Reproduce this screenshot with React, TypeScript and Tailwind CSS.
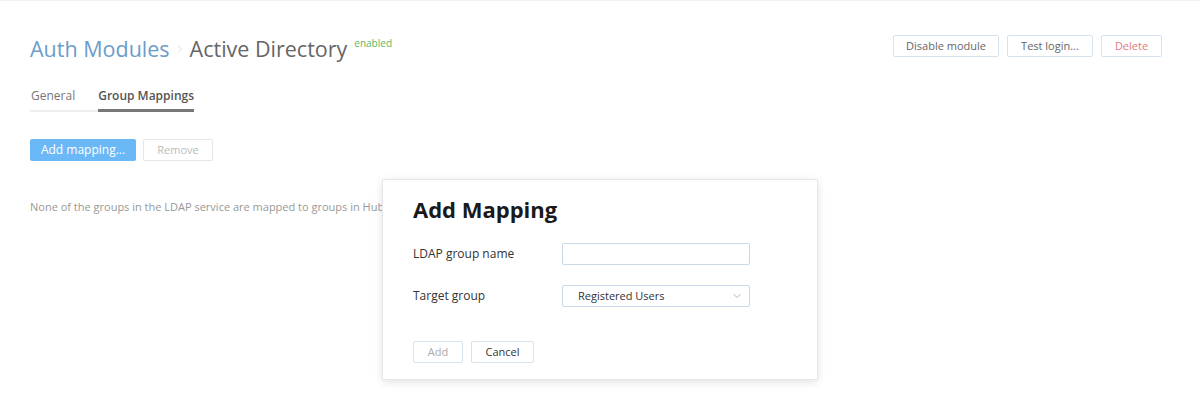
import { ChevronDown, ChevronRight } from "lucide-react";

const font = { fontFamily: '"Open Sans", "Noto Sans", sans-serif' };

function GhostButton({
  children,
  tone = "text-[#666]",
  className = "",
}: {
  children: React.ReactNode;
  tone?: string;
  className?: string;
}) {
  return (
    <button
      className={`flex h-[22px] items-center justify-center rounded-[2px] border border-[#d5e3f0] bg-white text-[11px] ${tone} ${className}`}
      type="button"
    >
      {children}
    </button>
  );
}

function AddMappingDialog() {
  return (
    <div className="absolute left-[382px] top-[178px] h-[201px] w-[436px] rounded-[2px] border border-[#e3e7ec] bg-white pl-[30px] pt-[14px] shadow-[0_2px_8px_rgba(0,0,0,0.12)]">
      <h2 className="text-[22px] font-bold leading-[30px] text-[#1a1a1a]">Add Mapping</h2>
      <div className="mt-[19px] flex items-center">
        <span className="w-[149px] text-[12px] text-[#333]">LDAP group name</span>
        <div className="h-[22px] w-[188px] rounded-[2px] border border-[#c9d9ea] bg-white" />
      </div>
      <div className="mt-[20px] flex items-center">
        <span className="w-[149px] text-[12px] text-[#333]">Target group</span>
        <div className="flex h-[22px] w-[188px] items-center justify-between rounded-[2px] border border-[#c9d9ea] bg-white pl-[15px] pr-[6px]">
          <span className="text-[11px] text-[#333]">Registered Users</span>
          <ChevronDown className="size-3 text-[#999]" strokeWidth={1.5} />
        </div>
      </div>
      <div className="mt-[34px] flex gap-[8px]">
        <GhostButton tone="text-[#aaa]" className="w-[50px]">
          Add
        </GhostButton>
        <GhostButton tone="text-[#333]" className="w-[63px]">
          Cancel
        </GhostButton>
      </div>
    </div>
  );
}

export default function App() {
  return (
    <div className="relative h-[412px] w-[1200px] overflow-hidden border-t border-[#f0f0f0] bg-white" style={font}>
      <div className="flex items-start justify-between pl-[30px] pr-[38px] pt-[33px]">
        <div className="flex items-baseline">
          <span className="text-[21.5px] leading-[30px] text-[#6c9cca]">Auth Modules</span>
          <ChevronRight className="mx-[4px] size-3 self-center text-[#ccc]" strokeWidth={1.5} />
          <span className="text-[21.5px] leading-[30px] text-[#666]">Active Directory</span>
          <span className="relative -top-[10px] ml-[7px] text-[10px] text-[#5cb85c]">enabled</span>
        </div>
        <div className="mt-[1px] flex gap-[8px]">
          <GhostButton className="w-[106px]">Disable module</GhostButton>
          <GhostButton className="w-[86px]">Test login...</GhostButton>
          <GhostButton tone="text-[#e07b80]" className="w-[61px]">
            Delete
          </GhostButton>
        </div>
      </div>

      <div className="mt-[23px] flex pl-[30px]">
        <div className="border-b-2 border-[#eee] pb-[5px] pl-[1px] pr-[23px] text-[12px] text-[#777]">General</div>
        <div className="border-b-[3px] border-[#777] pb-[4px] text-[12px] font-semibold text-[#555]">Group Mappings</div>
      </div>

      <div className="mt-[27px] flex gap-[7px] pl-[30px]">
        <button
          className="flex h-[22px] w-[106px] items-center justify-center rounded-[2px] bg-[#6bb8f7] text-[12px] text-white"
          type="button"
        >
          Add mapping...
        </button>
        <GhostButton tone="text-[#bbb]" className="w-[70px] border-[#e6e6e6]">
          Remove
        </GhostButton>
      </div>

      <p className="mt-[38px] pl-[30px] text-[11px] text-[#999]">
        None of the groups in the LDAP service are mapped to groups in Hub
      </p>

      <AddMappingDialog />
    </div>
  );
}
